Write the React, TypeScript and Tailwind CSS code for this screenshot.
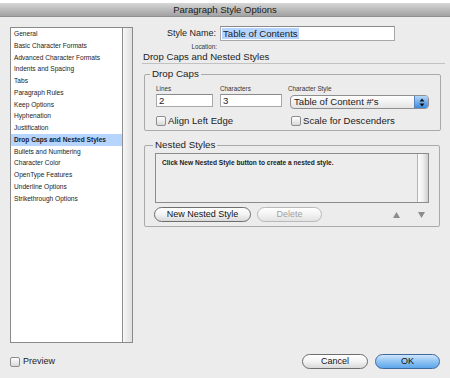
const sections = [
  'General',
  'Basic Character Formats',
  'Advanced Character Formats',
  'Indents and Spacing',
  'Tabs',
  'Paragraph Rules',
  'Keep Options',
  'Hyphenation',
  'Justification',
  'Drop Caps and Nested Styles',
  'Bullets and Numbering',
  'Character Color',
  'OpenType Features',
  'Underline Options',
  'Strikethrough Options',
];

function Checkbox() {
  return (
    <span className="block w-[10px] h-[10px] shrink-0 rounded-[2px] border border-[#8c8c8c] bg-linear-to-b from-white to-[#d9d9d9]" />
  );
}

function Field({ value, className }: { value: string; className?: string }) {
  return (
    <div
      className={`h-[13px] bg-white border border-[#a8a8a8] border-t-[#8a8a8a] flex items-center pl-[2px] text-[9.6px] leading-none ${className ?? ''}`}
    >
      {value}
    </div>
  );
}

function PillButton({
  label,
  width,
  disabled,
  primary,
}: {
  label: string;
  width: string;
  disabled?: boolean;
  primary?: boolean;
}) {
  const tone = primary
    ? 'border-[#40699e] bg-linear-to-b from-[#cfe6fc] via-[#8ec3f3] to-[#5ea6ec] text-[#111]'
    : disabled
      ? 'border-[#b9b9b9] bg-linear-to-b from-white via-[#f3f3f3] to-[#e2e2e2] text-[#a2a2a2]'
      : 'border-[#6e6e6e] bg-linear-to-b from-white via-[#f3f3f3] to-[#d9d9d9] text-[#111]';
  return (
    <div
      className={`${width} h-[15px] rounded-full border flex items-center justify-center text-[9px] leading-none ${tone}`}
    >
      {label}
    </div>
  );
}

export default function App() {
  return (
    <div className="w-[450px] h-[378px] overflow-hidden flex flex-col bg-[#ececec] text-[#1c1c1c] font-['Liberation_Sans',Arial,sans-serif]">
      {/* Window title */}
      <div className="h-[3px] bg-white" />
      <div className="h-[14px] flex items-center justify-center border-b border-[#8f8f8f] bg-linear-to-b from-[#d6d6d6] to-[#a2a2a2] text-[9.5px] leading-none text-[#1a1a1a]">
        Paragraph Style Options
      </div>

      <div className="flex pt-[10px] pl-[10px]">
        {/* Section list */}
        <div className="w-[123px] h-[316px] flex border border-[#8a8a8a] bg-white">
          <div className="flex-1 flex flex-col">
            {sections.map((s) => (
              <div
                key={s}
                className={`h-[11.75px] leading-[11.75px] pl-[3px] text-[6.6px] ${
                  s === 'Drop Caps and Nested Styles' ? 'bg-[#b5d5ff] font-bold' : ''
                }`}
              >
                {s}
              </div>
            ))}
          </div>
          <div className="w-[10px] border-l border-[#8f8f8f] bg-linear-to-r from-[#f7f7f7] to-[#e0e0e0]" />
        </div>

        {/* Options panel */}
        <div className="ml-[9px] -mt-px w-[303px] flex flex-col">
          <div className="h-[15px] flex items-center">
            <div className="w-[74px] text-right text-[9px] leading-none">Style Name:</div>
            <div className="ml-[4px] w-[175px] h-[15px] flex items-center pl-px bg-white border border-[#a8a8a8] border-t-[#8a8a8a]">
              <span className="bg-[#b5d5ff] px-px text-[9.6px] leading-[11px]">Table of Contents</span>
            </div>
          </div>
          <div className="w-[75px] mt-[2px] text-right text-[6.3px] leading-[8px] text-[#333]">Location:</div>
          <div className="pl-px text-[9.6px] leading-[12px]">Drop Caps and Nested Styles</div>
          <div className="h-px bg-[#c2c2c2]" />

          {/* Drop Caps */}
          <fieldset className="mt-[4px] ml-[2px] w-[297px] pl-[5px] pb-[3px] rounded-[2px] border border-[#aaaaaa]">
            <legend className="px-[2px] text-[9.8px] leading-[12px]">Drop Caps</legend>
            <div className="mt-[5px] pl-[6px] flex items-start">
              <div className="w-[57px]">
                <div className="text-[6.3px] leading-[8px] text-[#333]">Lines</div>
                <Field value="2" className="mt-px" />
              </div>
              <div className="ml-[7px] w-[62px]">
                <div className="text-[6.3px] leading-[8px] text-[#333]">Characters</div>
                <Field value="3" className="mt-px" />
              </div>
              <div className="ml-[6px] w-[141px]">
                <div className="text-[6.3px] leading-[8px] text-[#333]">Character Style</div>
                <div className="mt-[2px] ml-[2px] w-[139px] h-[14px] flex items-center overflow-hidden rounded-[4px] border border-[#8f8f8f] bg-linear-to-b from-white to-[#e4e4e4]">
                  <span className="flex-1 pl-[3px] text-[9.6px] leading-none">Table of Content #'s</span>
                  <span className="w-[14px] h-full flex items-center justify-center border-l border-[#5683bd] bg-linear-to-b from-[#b4d7f8] via-[#74b0ee] to-[#3d87de]">
                    <svg width="6" height="9" viewBox="0 0 6 9">
                      <path d="M3 0.5 L5.5 3.5 H0.5 Z" fill="#111" />
                      <path d="M3 8.5 L5.5 5.5 H0.5 Z" fill="#111" />
                    </svg>
                  </span>
                </div>
              </div>
            </div>
            <div className="mt-[5px] pl-[6px] h-[13px] flex items-center text-[9.6px] leading-none">
              <div className="w-[135px] flex items-center gap-[2px]">
                <Checkbox />
                Align Left Edge
              </div>
              <div className="flex items-center gap-[2px]">
                <Checkbox />
                Scale for Descenders
              </div>
            </div>
          </fieldset>

          {/* Nested Styles */}
          <fieldset className="mt-[8px] ml-[2px] w-[296px] pl-[5px] pb-[4px] rounded-[2px] border border-[#aaaaaa]">
            <legend className="ml-[3px] px-[2px] text-[9.8px] leading-[12px]">Nested Styles</legend>
            <div className="mt-[2px] ml-[5px] w-[274px] h-[50px] flex border border-[#8c8c8c] bg-[#ededed]">
              <div className="flex-1 pl-[6px] pt-[5px] text-[6.6px] leading-[8px] font-bold">
                Click New Nested Style button to create a nested style.
              </div>
              <div className="w-[11px] border-l border-[#b4b4b4] bg-linear-to-r from-[#fcfcfc] via-[#f0f0f0] to-[#cdcdcd]" />
            </div>
            <div className="mt-[4px] ml-[4px] flex items-center">
              <PillButton label="New Nested Style" width="w-[97px]" />
              <div className="ml-[6px]">
                <PillButton label="Delete" width="w-[65px]" disabled />
              </div>
              <svg className="ml-[71px]" width="7" height="6" viewBox="0 0 7 6">
                <path d="M3.5 0 L7 6 H0 Z" fill="#8c8c8c" />
              </svg>
              <svg className="ml-[18px]" width="7" height="6" viewBox="0 0 7 6">
                <path d="M3.5 6 L7 0 H0 Z" fill="#8c8c8c" />
              </svg>
            </div>
          </fieldset>
        </div>
      </div>

      {/* Footer */}
      <div className="mt-[11px] h-[15px] flex items-center px-[10px]">
        <Checkbox />
        <span className="ml-[3px] text-[9px] leading-none">Preview</span>
        <div className="ml-auto flex gap-[7px]">
          <PillButton label="Cancel" width="w-[66px]" />
          <PillButton label="OK" width="w-[65px]" primary />
        </div>
      </div>
    </div>
  );
}
